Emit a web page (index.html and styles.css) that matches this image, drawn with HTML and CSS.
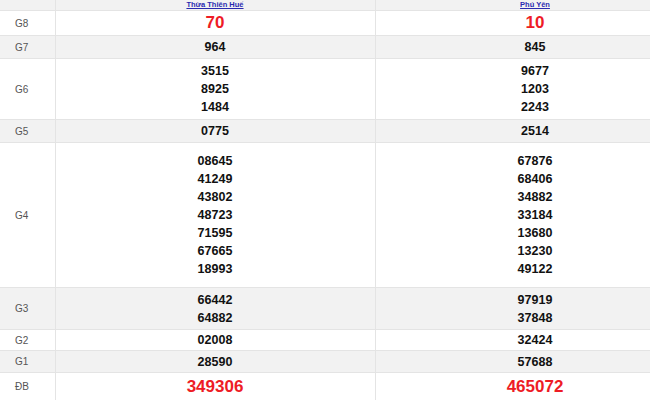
FILE: index.html
```html
<!DOCTYPE html>
<html lang="vi">
<head>
<meta charset="utf-8">
<link rel="stylesheet" href="styles.css">
</head>
<body>
<table class="kq">
  <colgroup><col class="c-label"><col class="c-prov"><col class="c-prov"></colgroup>
  <tr class="r-head alt">
    <td></td>
    <td><a href="#">Thừa Thiên Huế</a></td>
    <td><a href="#">Phú Yên</a></td>
  </tr>
  <tr class="r-g8">
    <td class="lbl">G8</td>
    <td class="big">70</td>
    <td class="big">10</td>
  </tr>
  <tr class="r-g7 alt">
    <td class="lbl">G7</td>
    <td><div class="n">964</div></td>
    <td><div class="n">845</div></td>
  </tr>
  <tr class="r-g6">
    <td class="lbl">G6</td>
    <td><div class="n">3515</div><div class="n">8925</div><div class="n">1484</div></td>
    <td><div class="n">9677</div><div class="n">1203</div><div class="n">2243</div></td>
  </tr>
  <tr class="r-g5 alt">
    <td class="lbl">G5</td>
    <td><div class="n">0775</div></td>
    <td><div class="n">2514</div></td>
  </tr>
  <tr class="r-g4">
    <td class="lbl">G4</td>
    <td><div class="n">08645</div><div class="n">41249</div><div class="n">43802</div><div class="n">48723</div><div class="n">71595</div><div class="n">67665</div><div class="n">18993</div></td>
    <td><div class="n">67876</div><div class="n">68406</div><div class="n">34882</div><div class="n">33184</div><div class="n">13680</div><div class="n">13230</div><div class="n">49122</div></td>
  </tr>
  <tr class="r-g3 alt">
    <td class="lbl">G3</td>
    <td><div class="n">66442</div><div class="n">64882</div></td>
    <td><div class="n">97919</div><div class="n">37848</div></td>
  </tr>
  <tr class="r-g2">
    <td class="lbl">G2</td>
    <td><div class="n">02008</div></td>
    <td><div class="n">32424</div></td>
  </tr>
  <tr class="r-g1 alt">
    <td class="lbl">G1</td>
    <td><div class="n">28590</div></td>
    <td><div class="n">57688</div></td>
  </tr>
  <tr class="r-db">
    <td class="lbl">ĐB</td>
    <td class="big">349306</td>
    <td class="big">465072</td>
  </tr>
</table>
</body>
</html>
```
FILE: styles.css
```css
html, body {
  margin: 0;
  padding: 0;
  background: #ffffff;
  overflow: hidden;
}
body {
  width: 650px;
  height: 400px;
  font-family: "Liberation Sans", Arial, sans-serif;
}
.kq {
  border-collapse: collapse;
  table-layout: fixed;
  width: 695px;
  margin: 0;
}
.c-label { width: 55px; }
.c-prov { width: 320px; }
.kq td {
  padding: 0;
  border: 1px solid #e4e4e4;
  border-top: none;
  text-align: center;
  vertical-align: middle;
  font-weight: bold;
  font-size: 12.5px;
  color: #111;
  box-sizing: border-box;
}
.kq td:first-child { border-left: none; }
.kq tr.alt td { background: #f2f2f2; }
.kq td.lbl {
  text-align: left;
  padding-left: 15px;
  font-weight: normal;
  font-size: 10px;
  color: #555;
}
.n { line-height: 18px; }
.kq td.big {
  font-size: 17px;
  color: #ee1c25;
}
.kq .r-head td { height: 10px; font-size: 7.5px; font-weight: bold; line-height: 10px; vertical-align: top; }
.r-head a { color: #2a2ab0; text-decoration: underline; }
.r-g8 td { height: 25px; }
.r-g7 td { height: 23px; }
.r-g6 td { height: 61px; }
.r-g5 td { height: 23px; }
.r-g4 td { height: 145px; }
.r-g3 td { height: 42px; }
.r-g2 td { height: 21px; }
.r-g1 td { height: 22px; }
.r-db td { height: 28px; }
```
